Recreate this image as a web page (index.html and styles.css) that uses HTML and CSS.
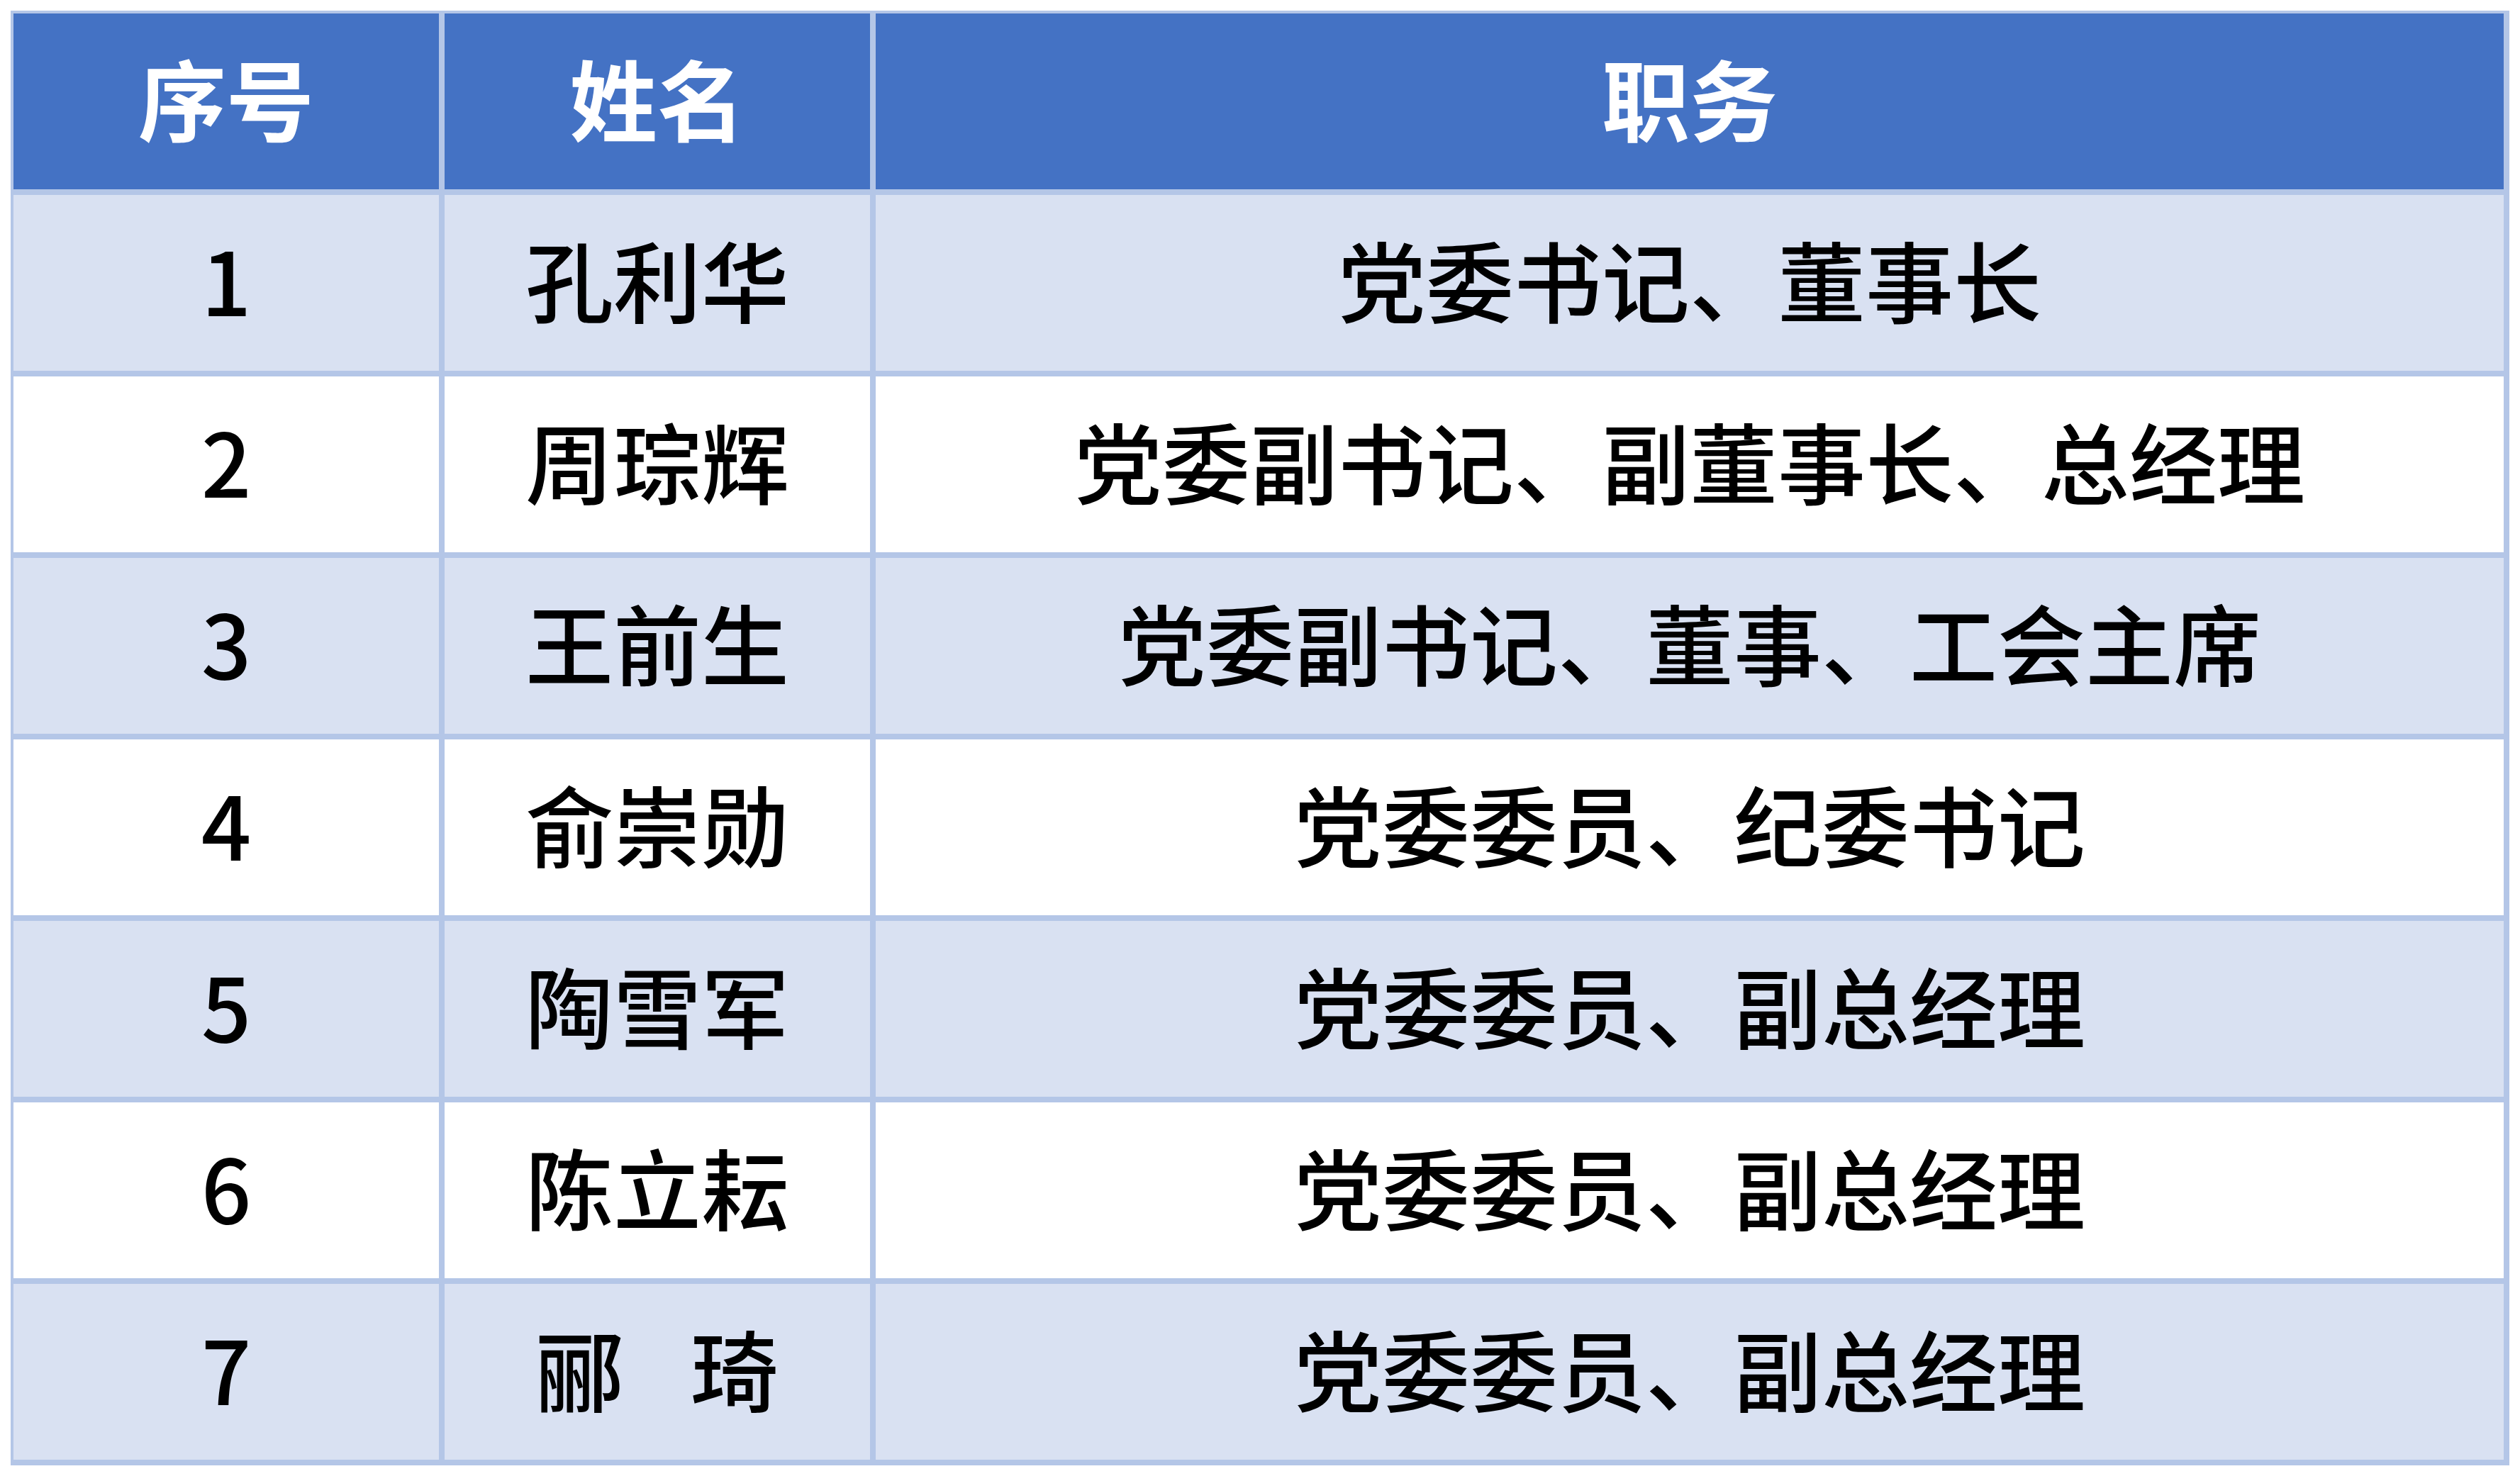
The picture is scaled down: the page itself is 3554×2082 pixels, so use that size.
FILE: index.html
```html
<!DOCTYPE html>
<html lang="zh-CN">
<head>
<meta charset="utf-8">
<title>领导班子</title>
<link rel="stylesheet" href="styles.css">
</head>
<body>
<div class="table">
  <div class="row head">
    <div class="cell">序号</div>
    <div class="cell">姓名</div>
    <div class="cell">职务</div>
  </div>
  <div class="row alt">
    <div class="cell">1</div>
    <div class="cell">孔利华</div>
    <div class="cell">党委书记、董事长</div>
  </div>
  <div class="row">
    <div class="cell">2</div>
    <div class="cell">周琮辉</div>
    <div class="cell">党委副书记、副董事长、总经理</div>
  </div>
  <div class="row alt">
    <div class="cell">3</div>
    <div class="cell">王前生</div>
    <div class="cell">党委副书记、董事、工会主席</div>
  </div>
  <div class="row">
    <div class="cell">4</div>
    <div class="cell">俞崇勋</div>
    <div class="cell">党委委员、纪委书记</div>
  </div>
  <div class="row alt">
    <div class="cell">5</div>
    <div class="cell">陶雪军</div>
    <div class="cell">党委委员、副总经理</div>
  </div>
  <div class="row">
    <div class="cell">6</div>
    <div class="cell">陈立耘</div>
    <div class="cell">党委委员、副总经理</div>
  </div>
  <div class="row alt">
    <div class="cell">7</div>
    <div class="cell">郦<span class="gap"></span>琦</div>
    <div class="cell">党委委员、副总经理</div>
  </div>
</div>
</body>
</html>
```

FILE: styles.css
```css
html, body {
  margin: 0;
  padding: 0;
  background: #ffffff;
}
body {
  padding: 15px;
  font-family: "Noto Sans CJK SC", "Noto Sans", sans-serif;
}
.table {
  display: grid;
  grid-template-columns: 600px 600px 2296px;
  grid-auto-rows: 248px;
  gap: 8px;
  padding: 4px 8px 8px 4px;
  background: #b4c6e7;
  width: max-content;
}
.row {
  display: contents;
}
.cell {
  display: flex;
  align-items: center;
  justify-content: center;
  padding-bottom: 14px;
  background: #ffffff;
  color: #000000;
  font-size: 124px;
  font-weight: 500;
  line-height: 1;
  white-space: nowrap;
}
.row.alt .cell {
  background: #d9e1f2;
}
.row.head .cell {
  background: #4472c4;
  color: #ffffff;
  font-weight: 700;
}
.gap {
  display: inline-block;
  width: 0.76em;
}
```
